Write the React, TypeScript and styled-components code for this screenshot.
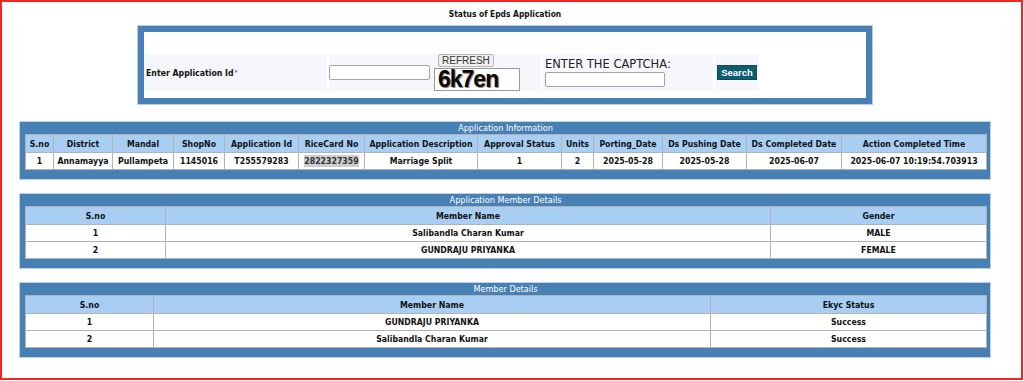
import styled, { createGlobalStyle } from 'styled-components';

const GlobalStyle = createGlobalStyle`
  body {
    margin: 0;
    background: #ffffff;
    font-family: 'DejaVu Sans Condensed', 'DejaVu Sans', sans-serif;
    font-stretch: condensed;
  }
`;

const condensed = `
  font-family: 'DejaVu Sans Condensed', 'DejaVu Sans', sans-serif;
  font-stretch: condensed;
`;

type Column = { label: string; width: number };

const appInfoColumns: Column[] = [
  { label: 'S.no', width: 28 },
  { label: 'District', width: 59 },
  { label: 'Mandal', width: 61 },
  { label: 'ShopNo', width: 51 },
  { label: 'Application Id', width: 74 },
  { label: 'RiceCard No', width: 66 },
  { label: 'Application Description', width: 113 },
  { label: 'Approval Status', width: 84 },
  { label: 'Units', width: 32 },
  { label: 'Porting_Date', width: 69 },
  { label: 'Ds Pushing Date', width: 84 },
  { label: 'Ds Completed Date', width: 95 },
  { label: 'Action Completed Time', width: 145 },
];

const appInfoRows = [
  [
    '1',
    'Annamayya',
    'Pullampeta',
    '1145016',
    'T255579283',
    '2822327359',
    'Marriage Split',
    '1',
    '2',
    '2025-05-28',
    '2025-05-28',
    '2025-06-07',
    '2025-06-07 10:19:54.703913',
  ],
];

const appMemberColumns: Column[] = [
  { label: 'S.no', width: 140 },
  { label: 'Member Name', width: 605 },
  { label: 'Gender', width: 216 },
];

const appMemberRows = [
  ['1', 'Salibandla Charan Kumar', 'MALE'],
  ['2', 'GUNDRAJU PRIYANKA', 'FEMALE'],
];

const memberColumns: Column[] = [
  { label: 'S.no', width: 128 },
  { label: 'Member Name', width: 557 },
  { label: 'Ekyc Status', width: 276 },
];

const memberRows = [
  ['1', 'GUNDRAJU PRIYANKA', 'Success'],
  ['2', 'Salibandla Charan Kumar', 'Success'],
];

type PanelProps = {
  title: string;
  columns: Column[];
  rows: string[][];
  highlightCol?: number;
};

const DataPanel = ({ title, columns, rows, highlightCol }: PanelProps) => (
  <Panel>
    <PanelCaption>{title}</PanelCaption>
    <DataTable>
      <colgroup>
        {columns.map((c) => (
          <col key={c.label} style={{ width: c.width }} />
        ))}
      </colgroup>
      <thead>
        <tr>
          {columns.map((c) => (
            <HeadCell key={c.label}>{c.label}</HeadCell>
          ))}
        </tr>
      </thead>
      <tbody>
        {rows.map((row, i) => (
          <tr key={i}>
            {row.map((value, j) => (
              <BodyCell key={j}>
                {j === highlightCol ? <Selected>{value}</Selected> : value}
              </BodyCell>
            ))}
          </tr>
        ))}
      </tbody>
    </DataTable>
  </Panel>
);

const App = () => (
  <>
    <GlobalStyle />
    <Frame>
      <Content>
        <PageTitle>Status of Epds Application</PageTitle>
        <SearchBox>
          <FormRow>
            <LabelCell>
              Enter Application Id<Required>*</Required>
            </LabelCell>
            <CaptchaImageCell>
              <TextInput $width={101} />
              <CaptchaStack>
                <RefreshButton>REFRESH</RefreshButton>
                <CaptchaImage>6k7en</CaptchaImage>
              </CaptchaStack>
            </CaptchaImageCell>
            <CaptchaCell>
              <CaptchaLabel>ENTER THE CAPTCHA:</CaptchaLabel>
              <TextInput $width={120} />
            </CaptchaCell>
            <SearchCell>
              <SearchButton>Search</SearchButton>
            </SearchCell>
          </FormRow>
        </SearchBox>

        <PanelSpacer $top={18}>
          <DataPanel
            title="Application Information"
            columns={appInfoColumns}
            rows={appInfoRows}
            highlightCol={5}
          />
        </PanelSpacer>
        <PanelSpacer $top={15}>
          <DataPanel title="Application Member Details" columns={appMemberColumns} rows={appMemberRows} />
        </PanelSpacer>
        <PanelSpacer $top={15}>
          <DataPanel title="Member Details" columns={memberColumns} rows={memberRows} />
        </PanelSpacer>
      </Content>
    </Frame>
  </>
);

const Frame = styled.div`
  box-sizing: border-box;
  width: 1023px;
  height: 380px;
  border: 2px solid #f52525;
  overflow: hidden;
`;

const Content = styled.div`
  width: 1006px;
  display: flex;
  flex-direction: column;
  align-items: center;
`;

const PageTitle = styled.div`
  ${condensed};
  margin-top: 6px;
  line-height: 12px;
  font-size: 8.4px;
  font-weight: bold;
  color: #111;
`;

const SearchBox = styled.div`
  box-sizing: border-box;
  width: 734px;
  height: 78px;
  margin-top: 6px;
  padding: 22px 0 5px;
  border: 6px solid #4a80b6;
  box-shadow: 0 0 0 1px #b9cbe0;
  background: #ffffff;
`;

const FormRow = styled.div`
  display: flex;
  gap: 2px;
  height: 37px;
`;

const FormCell = styled.div`
  display: flex;
  align-items: center;
  background: #f5f7fc;
`;

const LabelCell = styled(FormCell)`
  ${condensed};
  width: 181px;
  padding-left: 2px;
  font-size: 8.7px;
  font-weight: bold;
  color: #111;
`;

const Required = styled.sup`
  color: #444;
  font-size: 7px;
  font-weight: normal;
  margin-left: 1px;
`;

const CaptchaImageCell = styled(FormCell)`
  width: 212px;
  gap: 4px;
`;

const TextInput = styled.input<{ $width: number }>`
  box-sizing: border-box;
  width: ${({ $width }) => $width}px;
  height: 15px;
  margin: 0;
  padding: 0 2px;
  border: 1px solid #a3a3a3;
  border-radius: 2px;
  background: #ffffff;
`;

const CaptchaStack = styled.div`
  display: flex;
  flex-direction: column;
  align-items: flex-start;
  gap: 1px;
`;

const RefreshButton = styled.button`
  box-sizing: border-box;
  height: 13px;
  margin: 0 0 0 4px;
  padding: 0 3px;
  border: 1px solid #b5b5b5;
  border-radius: 2px;
  background: #efefef;
  font-family: 'Liberation Sans', Arial, sans-serif;
  font-size: 10px;
  line-height: 11px;
  color: #333;
`;

const CaptchaImage = styled.div`
  box-sizing: border-box;
  width: 86px;
  height: 23px;
  padding-left: 3px;
  border: 1px solid #9a9a9a;
  background: #ffffff;
  font-family: 'Liberation Sans', Arial, sans-serif;
  font-size: 23px;
  font-weight: 900;
  line-height: 21px;
  letter-spacing: -1px;
  color: #0a0a0a;
  text-shadow: 1px 1px 1px #777;
`;

const CaptchaCell = styled(FormCell)`
  width: 168px;
  padding-left: 2px;
  flex-direction: column;
  align-items: flex-start;
  justify-content: center;
  gap: 1px;
`;

const CaptchaLabel = styled.div`
  font-family: 'DejaVu Sans', Verdana, sans-serif;
  font-stretch: normal;
  font-size: 11.5px;
  line-height: 13px;
  color: #222;
`;

const SearchCell = styled(FormCell)`
  width: 44px;
  justify-content: center;
`;

const SearchButton = styled.button`
  box-sizing: border-box;
  width: 40px;
  height: 15px;
  margin: 0;
  padding: 0;
  border: 1px solid #0b4d5e;
  background: #0f5b6f;
  color: #ffffff;
  font-family: 'Liberation Sans', Arial, sans-serif;
  font-size: 9.5px;
  font-weight: bold;
`;

const PanelSpacer = styled.div<{ $top: number }>`
  margin-top: ${({ $top }) => $top}px;
`;

const Panel = styled.div`
  box-sizing: border-box;
  width: 970px;
  padding: 0 4px 9px 5px;
  background: #4680b5;
  box-shadow: 0 0 0 1px #c2d2e3;
`;

const PanelCaption = styled.div`
  ${condensed};
  height: 12px;
  line-height: 12px;
  font-size: 9px;
  text-align: center;
  color: #ffffff;
`;

const DataTable = styled.table`
  width: 100%;
  border-collapse: collapse;
  table-layout: fixed;
  ${condensed};
  font-size: 8.7px;
  font-weight: bold;
  color: #111;
`;

const HeadCell = styled.th`
  height: 17px;
  padding: 0 2px;
  border: 1px solid #b3b3b3;
  background: #a8cff3;
  text-align: center;
  white-space: nowrap;
`;

const BodyCell = styled.td`
  height: 16px;
  padding: 0 2px;
  border: 1px solid #b3b3b3;
  background: #ffffff;
  text-align: center;
  white-space: nowrap;
`;

const Selected = styled.span`
  background: #cdcdcd;
  color: #333;
  padding: 1px 0;
`;

export default App;
